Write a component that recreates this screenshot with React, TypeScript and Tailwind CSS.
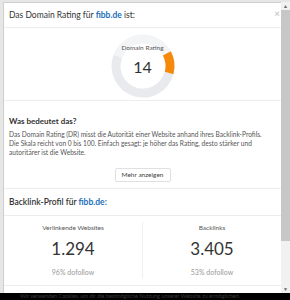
import React from "react";

function Gauge({ value }: { value: number }) {
  return (
    <div className="relative h-[70px] w-[70px]">
      <svg width="70" height="70" viewBox="0 0 70 70">
        <path d="M58.84 22.33 A27 27 0 0 0 9.79 25.33" fill="none" stroke="#f3f4f6" strokeWidth="9" />
        <path d="M61.08 41.99 A27 27 0 1 1 9.79 25.33" fill="none" stroke="#e9eaee" strokeWidth="9" />
        <path d="M58.84 22.33 A27 27 0 0 1 61.08 41.99" fill="none" stroke="#f5890c" strokeWidth="9" />
      </svg>
      <div className="absolute inset-0 flex flex-col items-center pt-[13px]">
        <span className="text-[6.5px] leading-[8px] text-[#555]">Domain Rating</span>
        <span className="mt-[6px] text-[16px] leading-[18px] text-[#333]">{value}</span>
      </div>
    </div>
  );
}

function Stat({ label, value, sub }: { label: string; value: string; sub: string }) {
  return (
    <div className="flex flex-1 flex-col items-center">
      <span className="mt-[8px] text-[6.5px] leading-[8px] text-[#555]">{label}</span>
      <span className="mt-[5px] text-[17px] leading-[24px] text-[#333]">{value}</span>
      <span className="mt-[7px] text-[7px] leading-[9px] text-[#999]">{sub}</span>
    </div>
  );
}

export default function App() {
  return (
    <div className="flex h-[300px] w-[290px] flex-col overflow-hidden bg-black font-['Lato',sans-serif]">
      <div className="flex h-[293px] bg-[#e6e6e6] pt-[2px]">
        <div className="w-[3px]" />
        {/* Modal */}
        <div className="flex flex-1 flex-col border-l border-t border-[#cfcfcf] bg-white">
          <div className="relative flex h-[25px] items-center border-b border-[#ededed] px-[5px]">
            <span className="text-[8.5px] text-[#333]">
              Das Domain Rating für <span className="font-bold text-[#1d6fb8]">fibb.de</span> ist:
            </span>
            <span className="absolute right-[1px] top-[5px] text-[10px] leading-[10px] text-[#bbb]">×</span>
          </div>

          <div className="flex h-[73px] justify-center border-b border-[#ededed] pt-[3px]">
            <Gauge value={14} />
          </div>

          <div className="flex h-[88px] flex-col border-b border-[#ededed] px-[5px] pt-[14px]">
            <span className="text-[8px] font-bold leading-[12px] text-[#333]">Was bedeutet das?</span>
            <p className="mt-[3px] whitespace-nowrap text-[6.6px] leading-[9px] text-[#555]">
              Das Domain Rating (DR) misst die Autorität einer Website anhand ihres Backlink-Profils.
              <br />
              Die Skala reicht von 0 bis 100. Einfach gesagt: je höher das Rating, desto stärker und
              <br />
              autoritärer ist die Website.
            </p>
            <div className="mt-[11px] flex justify-center">
              <button className="h-[14px] rounded-[2px] border border-[#e0e0e0] px-[6px] text-[6.5px] leading-[12px] text-[#444]">
                Mehr anzeigen
              </button>
            </div>
          </div>

          <div className="flex h-[27px] items-center border-b border-[#ededed] px-[5px]">
            <span className="text-[8.5px] font-semibold text-[#333]">
              Backlink-Profil für <span className="font-bold text-[#1d6fb8]">fibb.de:</span>
            </span>
          </div>

          <div className="flex h-[70px] border-b border-[#ededed]">
            <Stat label="Verlinkende Websites" value="1.294" sub="96% dofollow" />
            <div className="my-[6px] w-px bg-[#f0f0f0]" />
            <Stat label="Backlinks" value="3.405" sub="53% dofollow" />
          </div>
          <div className="flex-1" />
        </div>

        {/* Scrollbar */}
        <div className="flex w-[9px] flex-col bg-[#f1f1f1]">
          <div className="flex h-[8px] items-center justify-center text-[5px] leading-[5px] text-[#666]">▲</div>
          <div className="h-[231px] bg-[#c7c7c7]" />
          <div className="flex-1" />
          <div className="flex h-[8px] items-center justify-center text-[5px] leading-[5px] text-[#666]">▼</div>
        </div>
      </div>
      <div className="h-[7px] overflow-hidden px-[20px]">
        <div className="whitespace-nowrap text-[5.5px] leading-[7px] text-[#3a3a3a]">
          Wir verwenden Cookies, um dir die bestmögliche Nutzung unserer Website zu ermöglichen.
        </div>
      </div>
    </div>
  );
}
